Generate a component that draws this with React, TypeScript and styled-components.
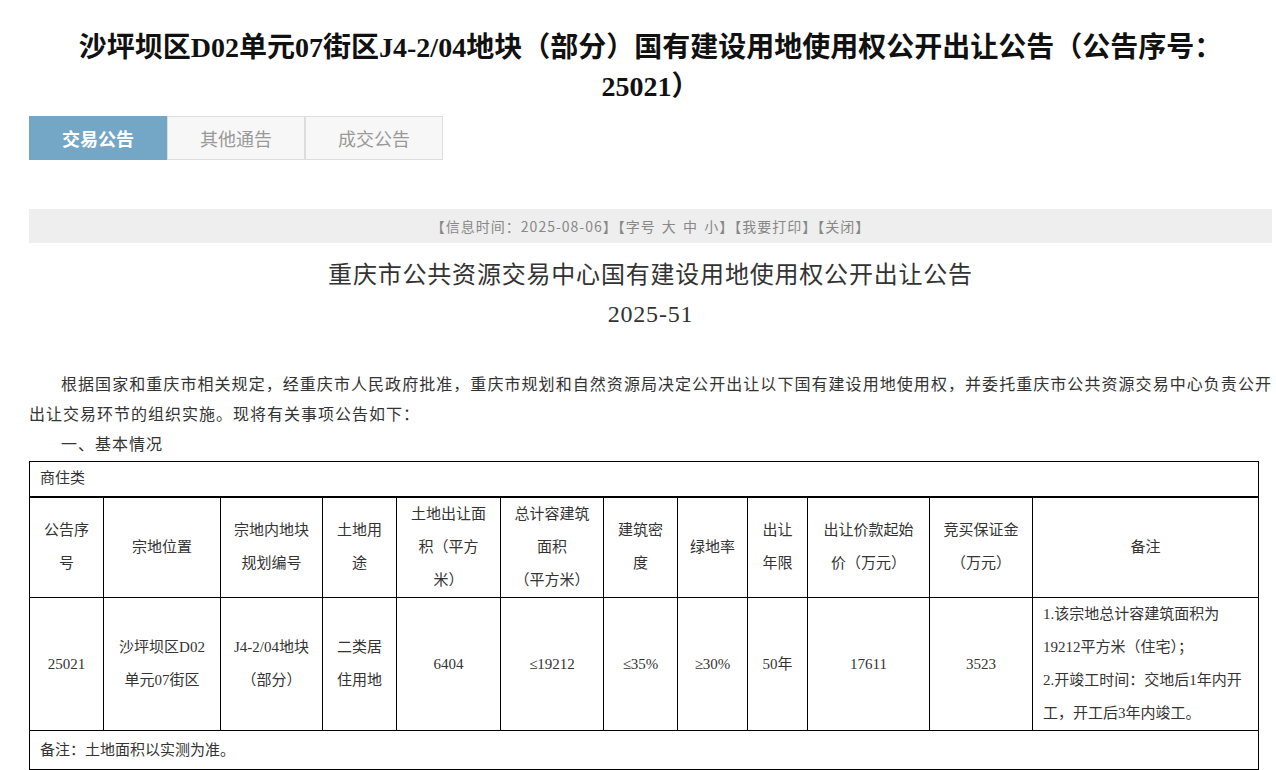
import React from "react";
import styled, { createGlobalStyle } from "styled-components";

const GlobalStyle = createGlobalStyle`
  html, body { margin: 0; padding: 0; background: #ffffff; }
  body { font-family: "Noto Sans CJK SC", "Noto Sans", sans-serif; color: #333; }
`;

const Page = styled.div`
  padding: 0 4px 0 29px;
`;

const Title = styled.h1`
  margin: 28px 0 0;
  font-family: "Liberation Serif", "Noto Sans CJK SC", serif;
  font-size: 28px;
  line-height: 39px;
  font-weight: 700;
  color: #111;
  text-align: center;
`;

const Tabs = styled.div`
  display: flex;
  margin-top: 10px;
`;

const Tab = styled.div<{ $active?: boolean }>`
  width: 138px;
  height: 44px;
  box-sizing: border-box;
  display: flex;
  align-items: center;
  justify-content: center;
  font-size: 18px;
  font-weight: ${(p) => (p.$active ? 700 : 400)};
  color: ${(p) => (p.$active ? "#ffffff" : "#999999")};
  background: ${(p) => (p.$active ? "#74a7c6" : "#f7f7f7")};
  border: 1px solid ${(p) => (p.$active ? "#74a7c6" : "#dddddd")};
`;

const InfoBar = styled.div`
  margin-top: 49px;
  height: 34px;
  background: #eeeeee;
  display: flex;
  align-items: center;
  justify-content: center;
  font-size: 14px;
  letter-spacing: 1px;
  word-spacing: 2px;
  color: #888888;
`;

const Heading = styled.div`
  margin-top: 13px;
  text-align: center;
  font-family: "Liberation Serif", "Noto Sans CJK SC", serif;
  font-size: 24px;
  letter-spacing: 0.8px;
  line-height: 39px;
  color: #333;
`;

const Paragraph = styled.p`
  margin: 0;
  font-size: 16px;
  letter-spacing: 1px;
  line-height: 30px;
  text-indent: 2em;
  text-align: justify;
  color: #333;
`;

const FirstParagraph = styled(Paragraph)`
  margin-top: 34px;
`;

const Table = styled.table`
  margin-top: 3px;
  width: 1229px;
  border-collapse: collapse;
  table-layout: fixed;
  font-family: "Liberation Serif", "Noto Sans CJK SC", serif;
  font-size: 15px;
  color: #333;
`;

const Cell = styled.td<{ $left?: boolean; $h?: number; $thick?: boolean }>`
  border: 1px solid #000;
  ${(p) => (p.$thick ? "border-bottom: 2px solid #000;" : "")}
  padding: 0 ${(p) => (p.$left ? "8px" : "4px")} 0 ${(p) => (p.$left ? "10px" : "4px")};
  height: ${(p) => (p.$h ? `${p.$h}px` : "auto")};
  line-height: 33px;
  text-align: ${(p) => (p.$left ? "left" : "center")};
  vertical-align: middle;
  box-sizing: border-box;
`;

const widths = [74, 117, 102, 74, 104, 103, 74, 70, 60, 122, 103, 226];

const headers: React.ReactNode[] = [
  <>公告序<br />号</>,
  <>宗地位置</>,
  <>宗地内地块<br />规划编号</>,
  <>土地用<br />途</>,
  <>土地出让面<br />积（平方<br />米）</>,
  <>总计容建筑<br />面积<br />（平方米）</>,
  <>建筑密<br />度</>,
  <>绿地率</>,
  <>出让<br />年限</>,
  <>出让价款起始<br />价（万元）</>,
  <>竞买保证金<br />（万元）</>,
  <>备注</>,
];

const values: React.ReactNode[] = [
  <>25021</>,
  <>沙坪坝区D02<br />单元07街区</>,
  <>J4-2/04地块<br />（部分）</>,
  <>二类居<br />住用地</>,
  <>6404</>,
  <>≤19212</>,
  <>≤35%</>,
  <>≥30%</>,
  <>50年</>,
  <>17611</>,
  <>3523</>,
];

export default function App() {
  return (
    <>
      <GlobalStyle />
      <Page>
        <Title>
          沙坪坝区D02单元07街区J4-2/04地块（部分）国有建设用地使用权公开出让公告（公告序号：
          <br />
          25021）
        </Title>
        <Tabs>
          <Tab $active>交易公告</Tab>
          <Tab>其他通告</Tab>
          <Tab>成交公告</Tab>
        </Tabs>
        <InfoBar>【信息时间：2025-08-06】【字号 大 中 小】【我要打印】【关闭】</InfoBar>
        <Heading>
          重庆市公共资源交易中心国有建设用地使用权公开出让公告
          <br />
          2025-51
        </Heading>
        <FirstParagraph>
          根据国家和重庆市相关规定，经重庆市人民政府批准，重庆市规划和自然资源局决定公开出让以下国有建设用地使用权，并委托重庆市公共资源交易中心负责公开出让交易环节的组织实施。现将有关事项公告如下：
        </FirstParagraph>
        <Paragraph>一、基本情况</Paragraph>
        <Table>
          <colgroup>
            {widths.map((w, i) => (
              <col key={i} style={{ width: w }} />
            ))}
          </colgroup>
          <tbody>
            <tr>
              <Cell colSpan={12} $left $h={35} $thick>商住类</Cell>
            </tr>
            <tr>
              {headers.map((h, i) => (
                <Cell key={i} $h={101}>{h}</Cell>
              ))}
            </tr>
            <tr>
              {values.map((v, i) => (
                <Cell key={i} $h={132}>{v}</Cell>
              ))}
              <Cell $left>
                1.该宗地总计容建筑面积为<br />
                19212平方米（住宅）；<br />
                2.开竣工时间：交地后1年内开<br />
                工，开工后3年内竣工。
              </Cell>
            </tr>
            <tr>
              <Cell colSpan={12} $left $h={39}>备注：土地面积以实测为准。</Cell>
            </tr>
          </tbody>
        </Table>
      </Page>
    </>
  );
}
